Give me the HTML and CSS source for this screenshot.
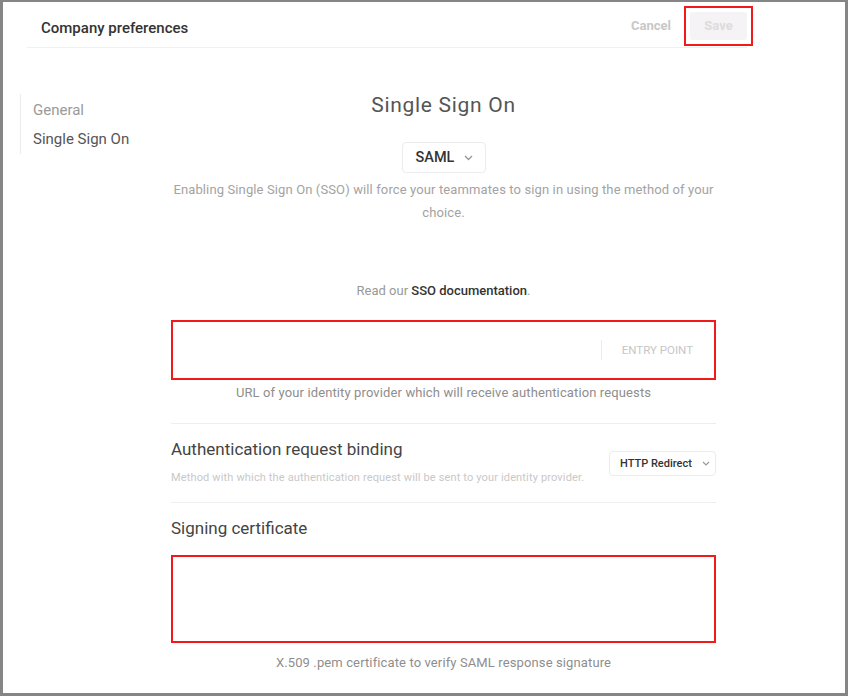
FILE: index.html
```html
<!DOCTYPE html>
<html>
<head>
<meta charset="utf-8">
<link rel="stylesheet" href="styles.css">
</head>
<body>
<div class="frame">
  <header class="header">
    <div class="header-title">Company preferences</div>
    <div class="header-actions">
      <button class="btn-cancel">Cancel</button>
      <span class="save-wrap"><button class="btn-save">Save</button></span>
    </div>
  </header>
  <div class="body">
    <nav class="nav">
      <div class="nav-item">General</div>
      <div class="nav-item active">Single Sign On</div>
    </nav>
    <main class="main">
      <h1 class="title">Single Sign On</h1>
      <div class="select select-saml">
        <span>SAML</span>
        <svg class="chev" width="9" height="6" viewBox="0 0 9 6"><path d="M1 1l3.5 3.5L8 1" fill="none" stroke="#999" stroke-width="1.4"/></svg>
      </div>
      <p class="desc">Enabling Single Sign On (SSO) will force your teammates to sign in using the method of your choice.</p>
      <p class="read">Read our <a class="doc-link">SSO documentation</a>.</p>
      <div class="field entry">
        <div class="field-input"></div>
        <div class="field-sep"></div>
        <div class="field-label">ENTRY POINT</div>
      </div>
      <p class="helper helper-entry">URL of your identity provider which will receive authentication requests</p>
      <div class="divider div-1"></div>
      <div class="setting">
        <div class="setting-text">
          <h2 class="setting-title">Authentication request binding</h2>
          <p class="setting-sub">Method with which the authentication request will be sent to your identity provider.</p>
        </div>
        <div class="select select-binding">
          <span>HTTP Redirect</span>
          <svg class="chev" width="8" height="5" viewBox="0 0 8 5"><path d="M1 1l3 3 3-3" fill="none" stroke="#999" stroke-width="1.2"/></svg>
        </div>
      </div>
      <div class="divider div-2"></div>
      <h2 class="setting-title cert-title">Signing certificate</h2>
      <div class="field cert"></div>
      <p class="helper helper-cert">X.509 .pem certificate to verify SAML response signature</p>
    </main>
  </div>
</div>
</body>
</html>
```

FILE: styles.css
```css
* { box-sizing: border-box; }
html, body { margin: 0; padding: 0; background: #fff; }
body { font-family: Roboto, "Liberation Sans", sans-serif; color: #444; }

.frame {
  width: 848px;
  height: 696px;
  border-style: solid;
  border-color: #858585;
  border-width: 2px 3px 3px 3px;
  background: #fff;
  overflow: hidden;
}

.header {
  margin-left: 24px;
  width: 720px;
  height: 46px;
  border-bottom: 1px solid #f0f0f0;
  display: flex;
  align-items: center;
  justify-content: space-between;
  padding-left: 14px;
}
.header-title {
  font-size: 15px;
  font-weight: 500;
  color: #333;
  padding-top: 7px;
}
.header-actions { display: flex; align-items: center; gap: 19px; padding-top: 2px; }
.btn-cancel {
  border: 0; background: none; padding: 0;
  font-family: inherit; font-size: 13px; font-weight: 700; color: #c8c8c8;
}
.save-wrap {
  display: flex;
  outline: 2px solid #f01a1a;
  outline-offset: 4px;
}
.btn-save {
  border: 0; background: #f5f3f5; border-radius: 3px;
  width: 57px; height: 28px; padding: 0;
  font-family: inherit; font-size: 13px; font-weight: 700; color: #dcdcdc;
}

.body { display: flex; }
.nav {
  margin-left: 17px;
  margin-top: 46px;
  height: 60px;
  width: 151px;
  border-left: 1px solid #ececec;
  padding-left: 12px;
  display: flex; flex-direction: column; gap: 9px;
  padding-top: 6px;
}
.nav-item { font-size: 15px; line-height: 20px; color: #9a9a9a; }
.nav-item.active { color: #555; }

.main {
  width: 545px;
  display: flex; flex-direction: column; align-items: center;
}
.title {
  margin: 45px 0 0;
  font-size: 21px; line-height: 24px; font-weight: 400;
  color: #555; letter-spacing: 0.7px;
}
.select {
  display: flex; align-items: center;
  border: 1px solid #ececec; border-radius: 4px;
  background: #fff;
  color: #333; font-weight: 500;
  white-space: nowrap;
  flex-shrink: 0;
}
.select-saml {
  margin-top: 25px;
  width: 84px; height: 31px;
  padding-left: 13px; gap: 10px;
  font-size: 14.5px;
}
.desc {
  margin: 5px 0 0;
  text-align: center;
  font-size: 13px; line-height: 23px; color: #a3a3a3;
  letter-spacing: 0.12px;
}
.read {
  margin: 57px 0 0;
  font-size: 13px; line-height: 20px; color: #999;
}
.doc-link { color: #333; font-weight: 500; }

.field {
  width: 545px;
  border: 2px solid #f01a1a;
  background: #fff;
}
.entry {
  margin-top: 19px;
  height: 60px;
  display: flex; align-items: center;
  padding-right: 21px;
}
.field-input { flex: 1; }
.field-sep { width: 1px; height: 20px; background: #ececec; margin-right: 20px; }
.field-label { font-size: 11.5px; color: #c6c6c6; }

.helper {
  margin: 3px 0 0;
  font-size: 13px; line-height: 20px; color: #8e8e8e;
  text-align: center;
  letter-spacing: 0.12px;
}
.divider { width: 545px; height: 1px; background: #eeeeee; }
.div-1 { margin-top: 20px; }

.setting {
  width: 545px;
  margin-top: 14px;
  display: flex; align-items: center; justify-content: space-between;
}
.setting-title {
  margin: 0;
  font-size: 17px; line-height: 22px; font-weight: 400; color: #444;
}
.setting-sub {
  margin: 10px 0 0;
  font-size: 11px; line-height: 16px; color: #c8c8c8;
  letter-spacing: 0.15px;
}
.select-binding {
  width: 107px; height: 25px;
  padding-left: 10px; gap: 10px;
  font-size: 11px; margin-top: 2px;
}
.div-2 { margin-top: 16px; }
.cert-title { width: 545px; margin-top: 14px; }
.cert { margin-top: 16px; height: 88px; }
.helper-cert { margin-top: 10px; }
```
